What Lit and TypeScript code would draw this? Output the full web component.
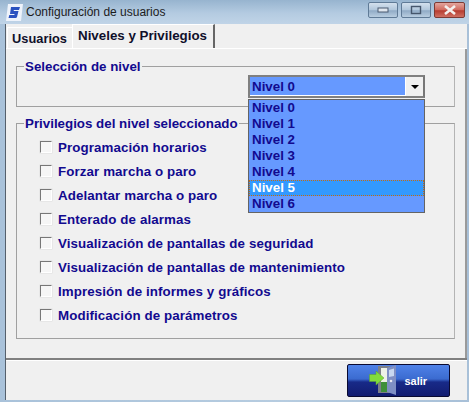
import { LitElement, html, css } from "lit";
import { customElement } from "lit/decorators.js";

const PRIVS = [
  "Programación horarios",
  "Forzar marcha o paro",
  "Adelantar marcha o paro",
  "Enterado de alarmas",
  "Visualización de pantallas de seguridad",
  "Visualización de pantallas de mantenimiento",
  "Impresión de informes y gráficos",
  "Modificación de parámetros",
];
const LEVELS = [0, 1, 2, 3, 4, 5, 6];

@customElement("app-root")
export class AppRoot extends LitElement {
  static styles = css`
    :host { display: block; width: 469px; height: 402px; overflow: hidden; font-family: "Liberation Sans", Arial, sans-serif; }
    .win { width: 469px; height: 402px; box-sizing: border-box; display: flex; flex-direction: column;
      background: linear-gradient(90deg, #a9c2da 0%, #b6cce0 60%, #a8c0d8 100%); }
    .title { height: 24px; flex: none; display: flex; align-items: center; padding: 0 3px 0 6px; gap: 3px;
      background: linear-gradient(180deg, #97b4cf 0%, #b4cbe1 55%, #c0d4e7 100%); }
    .logo { width: 17px; height: 17px; flex: none; }
    .ttext { font-size: 12px; color: #1c1c1c; flex: 1; }
    .wbtns { display: flex; gap: 3px; margin-top: -5px; margin-right: 1px; }
    .wb { height: 16px; width: 30px; box-sizing: border-box; border: 1px solid #5f7a96; border-radius: 2px;
      background: linear-gradient(180deg, #d3e0ed 0%, #b0c6db 50%, #90abc6 55%, #b9cde0 100%);
      display: flex; align-items: center; justify-content: center; }
    .wb.close { width: 31px; border-color: #7d3a34; background: linear-gradient(180deg, #e2a59d 0%, #d0685c 50%, #b63c30 55%, #cf6f62 100%); }
    .client { flex: 1; margin: 0 2.500px 2px 4.500px; display: flex; flex-direction: column; background: #f0f0f0;
      border-left: 1px solid #55606c; min-height: 0; }
    .tabs { height: 24px; flex: none; display: flex; align-items: flex-end; padding-left: 1px; background: #f0f0f0; border-bottom: 1px solid #fff; box-sizing: content-box; margin-bottom: -1px; position: relative; z-index: 1; }
    .tab { box-sizing: border-box; font-weight: bold; font-size: 13.330px; color: #0f0f2a; display: flex; align-items: center; justify-content: center; }
    .tab.off { width: 65px; height: 21px; border-top: 1px solid #fff; border-left: 1px solid #fff; font-size: 12.800px; }
    .tab.on { width: 143px; height: 24px; border-top: 1px solid #fff; border-left: 1px solid #fff; border-right: 2px solid #666; padding-bottom: 3px; }
    .page { flex: 1; display: flex; flex-direction: column; border-right: 2px solid #9a9a9a; padding: 18px 10px 0 10.500px; min-height: 0; position: relative; }
    .group { border: 1px solid #a0a0a0; border-right-color: #b4b4b4; position: relative; box-sizing: border-box; }
    .g1 { height: 41px; flex: none; }
    .g2 { height: 216px; flex: none; margin-top: 16px; display: flex; flex-direction: column; padding: 11px 0 0 23px; }
    .legend { position: absolute; left: 7px; top: -8px; background: #f0f0f0; padding: 0 1px; font-weight: bold; font-size: 13.330px; line-height: 15px; color: #120a8f; white-space: nowrap; }
    .row { height: 24px; flex: none; display: flex; align-items: center; gap: 6px; }
    .cb { width: 12px; height: 12px; box-sizing: border-box; border: 1px solid; border-color: #777 #fff #fff #777; background: #f6f6f6; box-shadow: 0 0 0 0.5px #ddd; flex: none; }
    .lbl { font-weight: bold; font-size: 13.330px; color: #120a8f; letter-spacing: 0.1px; white-space: nowrap; }
    .combo { position: absolute; left: 231px; top: 8px; width: 177px; height: 23px; box-sizing: border-box; border: 2px solid #808080; border-right-color: #777;
      background: #6699ff; display: flex; }
    .combo .val { flex: 1; font-weight: bold; font-size: 13.330px; color: #120a8f; line-height: 19px; padding-left: 2px; border-bottom: 1px solid #fff; }
    .arrow { width: 17px; background: #f0f0f0; display: flex; align-items: center; justify-content: center; border-left: 1px solid #fff; }
    .arrow i { width: 0; height: 0; border: 4px solid transparent; border-top: 4px solid #000; border-bottom: 0; }
    .list { position: absolute; left: 231px; top: 32px; width: 177px; box-sizing: border-box; border: 1px solid #646464; background: #6699ff; z-index: 2; }
    .opt { height: 16px; box-sizing: border-box; padding-left: 3px; font-weight: bold; font-size: 13.330px; line-height: 16px; color: #120a8f; }
    .opt.sel { background: #3399ff; color: #fff; outline: 1px dotted #c86a10; outline-offset: -1px; }
    .footer { height: 42px; flex: none; box-sizing: border-box; border-top: 2px solid #808080; box-shadow: inset 0 1px 0 #fff; display: flex; justify-content: flex-end; align-items: flex-start; padding: 4px 17px 0 0; }
    .salir { width: 103px; height: 33px; box-sizing: border-box; border: 1px solid #0a0a30; border-radius: 2px; display: flex; align-items: center;
      background: linear-gradient(180deg, #4f82e8 0%, #3b6bd0 45%, #182a88 55%, #121c70 100%); color: #fff; font-weight: bold; font-size: 11px; padding: 0 0 0 21px; gap: 4px; }
    .spacer { flex: 1; }
  `;

  render() {
    return html`<div class="win">
      <div class="title">
        <svg class="logo" viewBox="0 0 17 17">
          <path d="M2 0h15l-2 17H0z" fill="#eef3fb" />
          <path d="M5 3h9l-1 3H8L7.500 7H12.500l-1.500 6a1.500 1.500 0 0 1-1.500 1H2.500l.8-3h5l.3-1H4z" fill="#2a52c0" />
        </svg>
        <span class="ttext">Configuración de usuarios</span>
        <div class="wbtns">
          <div class="wb"><svg width="12" height="6" viewBox="0 0 12 6"><rect x="1" y="1" width="10" height="4" fill="#dfe6ee" stroke="#4a5a70" /></svg></div>
          <div class="wb"><svg width="12" height="10" viewBox="0 0 12 10"><rect x="1.500" y="1.500" width="9" height="7" fill="none" stroke="#45566c" stroke-width="1.400" /></svg></div>
          <div class="wb close"><svg width="14" height="10" viewBox="0 0 14 10"><path d="M2 1l10 8M12 1L2 9" stroke="#f4f0ee" stroke-width="2.600" /></svg></div>
        </div>
      </div>
      <div class="client">
        <div class="tabs">
          <div class="tab off">Usuarios</div>
          <div class="tab on">Niveles y Privilegios</div>
          <div class="spacer"></div>
        </div>
        <div class="page">
          <div class="group g1">
            <div class="legend">Selección de nivel</div>
            <div class="combo"><div class="val">Nivel 0</div><div class="arrow"><i></i></div></div>
            <div class="list">
              ${LEVELS.map((n) => html`<div class="opt ${n === 5 ? "sel" : ""}">Nivel ${n}</div>`)}
            </div>
          </div>
          <div class="group g2">
            <div class="legend">Privilegios del nivel seleccionado</div>
            ${PRIVS.map((p) => html`<div class="row"><span class="cb"></span><span class="lbl">${p}</span></div>`)}
          </div>
        </div>
        <div class="footer">
          <div class="salir">
            <svg width="32" height="31" viewBox="0 0 32 31" style="flex:none">
              <path d="M9 1H21V28H9Z" fill="#7d8088" />
              <path d="M12 3H20V27H12Z" fill="#eef2e6" />
              <path d="M12 17H20V27H12Z" fill="#3f8f3a" />
              <path d="M18 3L27 0V30L18 27Z" fill="#7f8fc4" />
              <path d="M20 5L25 3.500V11L20 12Z" fill="#c8d8f0" />
              <circle cx="22" cy="16" r="1.300" fill="#e8e8f0" />
              <path d="M0.500 9.500H7V6L15 13L7 20V16.500H0.500Z" fill="#82dc3c" stroke="#5aa02a" stroke-width="0.500" />
            </svg>
            <span>salir</span>
          </div>
        </div>
      </div>
    </div>`;
  }
}
